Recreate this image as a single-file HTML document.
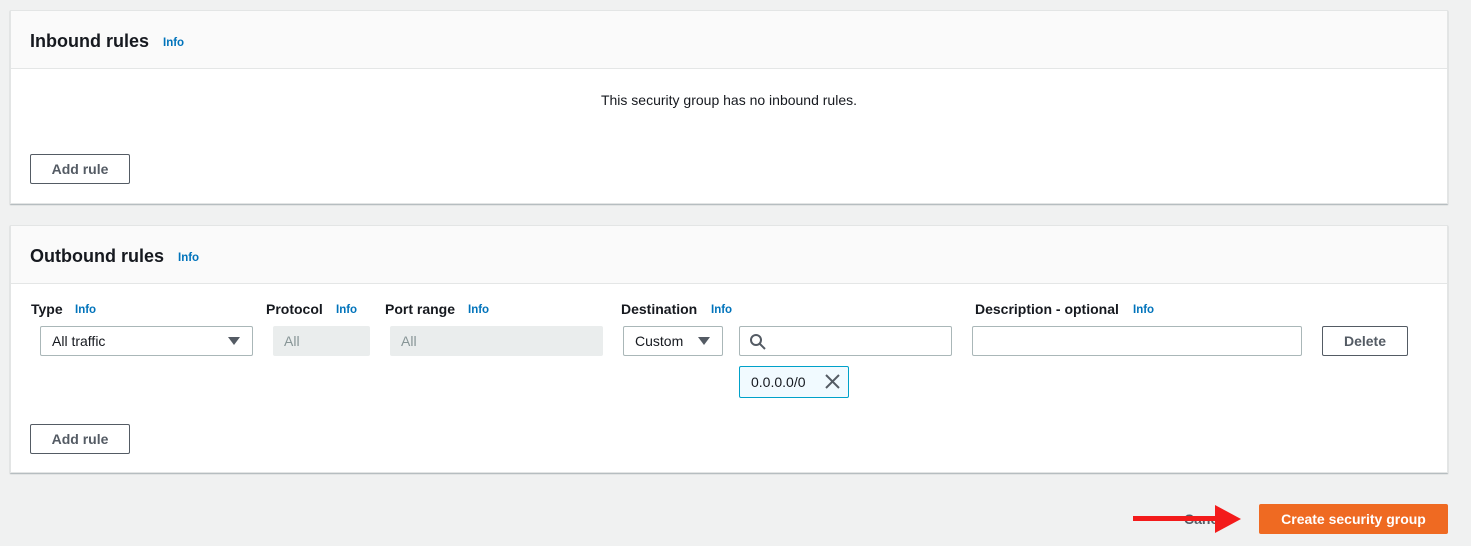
<!DOCTYPE html>
<html><head><style>
*{box-sizing:border-box;margin:0;padding:0}
body{width:1471px;height:546px;background:#f0f1f1;font-family:"Liberation Sans",sans-serif;color:#16191f;position:relative;overflow:hidden}
.a{position:absolute}
.panel{position:absolute;left:10px;width:1438px;background:#fff;border:1px solid #e3e5e5;box-shadow:0 1px 1px rgba(0,28,36,.3)}
.hdr{position:absolute;left:0;top:0;right:0;background:#fafafa;border-bottom:1px solid #e4e6e6}
h2{position:absolute;font-size:18px;font-weight:bold}
.info{color:#0073bb;font-size:11.5px;font-weight:bold;position:absolute}
.lbl{position:absolute;font-size:14px;font-weight:bold}
.btn{position:absolute;border:1px solid #545b64;border-radius:2px;background:#fff;font-size:14px;font-weight:bold;color:#545b64;text-align:center}
.inp{position:absolute;border:1px solid #aab7b8;border-radius:2px;background:#fff;font-size:14px;height:30px;line-height:28px;padding-left:11px}
.dis{position:absolute;background:#eaeded;border-radius:2px;height:30px;line-height:30px;padding-left:11px;font-size:14px;color:#879596}
.tri{position:absolute;width:0;height:0;border-left:6px solid transparent;border-right:6px solid transparent;border-top:8px solid #545b64}
</style></head><body>
<div class="panel" style="top:10px;height:194px">
 <div class="hdr" style="height:58px"></div>
 <h2 style="left:19px;top:20px">Inbound rules</h2>
 <span class="info" style="left:152px;top:26px">Info</span>
 <div class="a" style="left:0;right:0;top:81px;text-align:center;font-size:14px">This security group has no inbound rules.</div>
 <div class="btn" style="left:19px;top:143px;width:100px;height:30px;line-height:28px">Add rule</div>
</div>
<div class="panel" style="top:225px;height:248px">
 <div class="hdr" style="height:58px"></div>
 <h2 style="left:19px;top:20px">Outbound rules</h2>
 <span class="info" style="left:167px;top:26px">Info</span>
</div>
<span class="lbl" style="left:31px;top:301px">Type</span><span class="info" style="left:75px;top:304px">Info</span>
<span class="lbl" style="left:266px;top:301px">Protocol</span><span class="info" style="left:336px;top:304px">Info</span>
<span class="lbl" style="left:385px;top:301px">Port range</span><span class="info" style="left:468px;top:304px">Info</span>
<span class="lbl" style="left:621px;top:301px">Destination</span><span class="info" style="left:711px;top:304px">Info</span>
<span class="lbl" style="left:975px;top:301px">Description - optional</span><span class="info" style="left:1133px;top:304px">Info</span>
<div class="inp" style="left:40px;top:326px;width:213px">All traffic</div><div class="tri" style="left:228px;top:337px"></div>
<div class="dis" style="left:273px;top:326px;width:97px">All</div>
<div class="dis" style="left:390px;top:326px;width:213px">All</div>
<div class="inp" style="left:623px;top:326px;width:100px">Custom</div><div class="tri" style="left:698px;top:337px"></div>
<div class="inp" style="left:739px;top:326px;width:213px"></div>
<svg class="a" style="left:749px;top:333px" width="18" height="18" viewBox="0 0 18 18"><circle cx="7" cy="7" r="5" fill="none" stroke="#545b64" stroke-width="2"/><path d="M11 11l5 5" stroke="#545b64" stroke-width="2"/></svg>
<div class="inp" style="left:972px;top:326px;width:330px"></div>
<div class="btn" style="left:1322px;top:326px;width:86px;height:30px;line-height:28px">Delete</div>
<div class="a" style="left:739px;top:366px;width:110px;height:32px;border:1px solid #00a1c9;border-radius:2px;background:#f1faff;font-size:14px;line-height:30px;padding-left:11px">0.0.0.0/0</div>
<svg class="a" style="left:825px;top:374px" width="15" height="15" viewBox="0 0 15 15"><path d="M1 1l13 13M14 1L1 14" stroke="#545b64" stroke-width="2"/></svg>
<div class="btn" style="left:30px;top:424px;width:100px;height:30px;line-height:28px">Add rule</div>
<span class="a" style="left:1184px;top:511px;font-size:14px;font-weight:bold;color:#545b64">Cancel</span>
<div class="a" style="left:1133px;top:516px;width:90px;height:5px;background:#f31b1b"></div>
<svg class="a" style="left:1215px;top:505px" width="28" height="28" viewBox="0 0 28 28"><path d="M0 0L26 14L0 28Z" fill="#f31b1b"/></svg>
<div class="a" style="left:1259px;top:504px;width:189px;height:30px;background:#ef6a22;border-radius:2px;color:#fff;font-size:14px;font-weight:bold;text-align:center;line-height:30px">Create security group</div>
</body></html>
